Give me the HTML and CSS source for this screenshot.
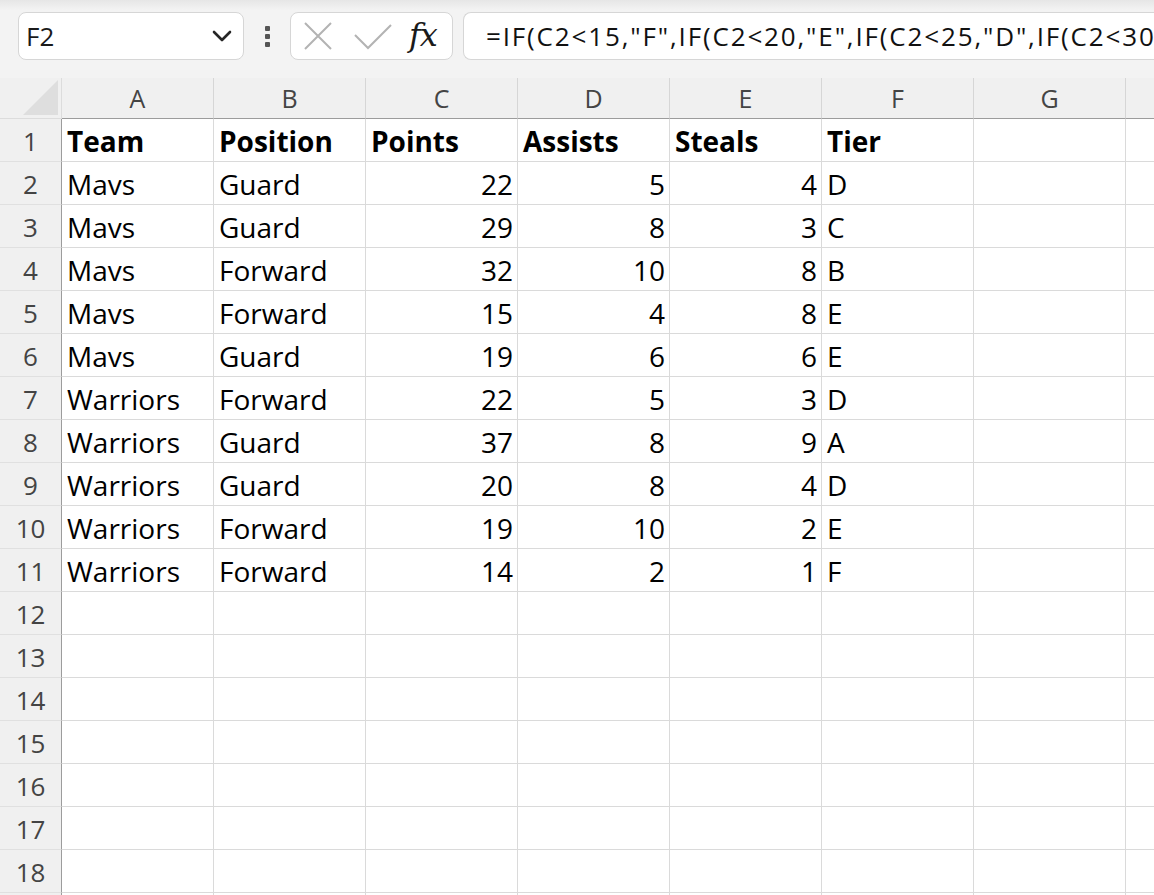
FILE: index.html
```html
<!DOCTYPE html>
<html lang="en">
<head>
<meta charset="utf-8">
<title>Book1 - Tiers</title>
<link rel="stylesheet" href="styles.css">
</head>
<body>
<div class="toolbar">
  <div class="namebox">
    <span class="namebox-ref">F2</span>
    <svg class="chevron" width="20" height="12" viewBox="0 0 20 12"><path d="M2 2 L10 10 L18 2" fill="none" stroke="#262626" stroke-width="2.6" stroke-linecap="round" stroke-linejoin="round"/></svg>
  </div>
  <div class="more">
    <span class="dot"></span><span class="dot"></span><span class="dot"></span>
  </div>
  <div class="fxbox">
    <svg class="icon-cancel" width="30" height="30" viewBox="0 0 30 30"><path d="M2 2 L28 28 M28 2 L2 28" stroke="#b3b3b3" stroke-width="2" fill="none"/></svg>
    <svg class="icon-enter" width="38" height="26" viewBox="0 0 38 26"><path d="M1 11 L14 24 L37 1" stroke="#b3b3b3" stroke-width="2" fill="none"/></svg>
    <span class="fx">fx</span>
  </div>
  <div class="formula">=IF(C2&lt;15,"F",IF(C2&lt;20,"E",IF(C2&lt;25,"D",IF(C2&lt;30,</div>
</div>

<div class="sheet">
  <div class="corner"><span class="corner-tri"></span></div>
  <div class="colhead">A</div><div class="colhead">B</div><div class="colhead">C</div><div class="colhead">D</div><div class="colhead">E</div><div class="colhead">F</div><div class="colhead">G</div><div class="colhead"></div>

  <div class="rowhead">1</div><div class="cell b">Team</div><div class="cell b">Position</div><div class="cell b">Points</div><div class="cell b">Assists</div><div class="cell b">Steals</div><div class="cell b">Tier</div><div class="cell"></div><div class="cell"></div>
  <div class="rowhead">2</div><div class="cell">Mavs</div><div class="cell">Guard</div><div class="cell n">22</div><div class="cell n">5</div><div class="cell n">4</div><div class="cell">D</div><div class="cell"></div><div class="cell"></div>
  <div class="rowhead">3</div><div class="cell">Mavs</div><div class="cell">Guard</div><div class="cell n">29</div><div class="cell n">8</div><div class="cell n">3</div><div class="cell">C</div><div class="cell"></div><div class="cell"></div>
  <div class="rowhead">4</div><div class="cell">Mavs</div><div class="cell">Forward</div><div class="cell n">32</div><div class="cell n">10</div><div class="cell n">8</div><div class="cell">B</div><div class="cell"></div><div class="cell"></div>
  <div class="rowhead">5</div><div class="cell">Mavs</div><div class="cell">Forward</div><div class="cell n">15</div><div class="cell n">4</div><div class="cell n">8</div><div class="cell">E</div><div class="cell"></div><div class="cell"></div>
  <div class="rowhead">6</div><div class="cell">Mavs</div><div class="cell">Guard</div><div class="cell n">19</div><div class="cell n">6</div><div class="cell n">6</div><div class="cell">E</div><div class="cell"></div><div class="cell"></div>
  <div class="rowhead">7</div><div class="cell">Warriors</div><div class="cell">Forward</div><div class="cell n">22</div><div class="cell n">5</div><div class="cell n">3</div><div class="cell">D</div><div class="cell"></div><div class="cell"></div>
  <div class="rowhead">8</div><div class="cell">Warriors</div><div class="cell">Guard</div><div class="cell n">37</div><div class="cell n">8</div><div class="cell n">9</div><div class="cell">A</div><div class="cell"></div><div class="cell"></div>
  <div class="rowhead">9</div><div class="cell">Warriors</div><div class="cell">Guard</div><div class="cell n">20</div><div class="cell n">8</div><div class="cell n">4</div><div class="cell">D</div><div class="cell"></div><div class="cell"></div>
  <div class="rowhead">10</div><div class="cell">Warriors</div><div class="cell">Forward</div><div class="cell n">19</div><div class="cell n">10</div><div class="cell n">2</div><div class="cell">E</div><div class="cell"></div><div class="cell"></div>
  <div class="rowhead">11</div><div class="cell">Warriors</div><div class="cell">Forward</div><div class="cell n">14</div><div class="cell n">2</div><div class="cell n">1</div><div class="cell">F</div><div class="cell"></div><div class="cell"></div>
  <div class="rowhead">12</div><div class="cell"></div><div class="cell"></div><div class="cell"></div><div class="cell"></div><div class="cell"></div><div class="cell"></div><div class="cell"></div><div class="cell"></div>
  <div class="rowhead">13</div><div class="cell"></div><div class="cell"></div><div class="cell"></div><div class="cell"></div><div class="cell"></div><div class="cell"></div><div class="cell"></div><div class="cell"></div>
  <div class="rowhead">14</div><div class="cell"></div><div class="cell"></div><div class="cell"></div><div class="cell"></div><div class="cell"></div><div class="cell"></div><div class="cell"></div><div class="cell"></div>
  <div class="rowhead">15</div><div class="cell"></div><div class="cell"></div><div class="cell"></div><div class="cell"></div><div class="cell"></div><div class="cell"></div><div class="cell"></div><div class="cell"></div>
  <div class="rowhead">16</div><div class="cell"></div><div class="cell"></div><div class="cell"></div><div class="cell"></div><div class="cell"></div><div class="cell"></div><div class="cell"></div><div class="cell"></div>
  <div class="rowhead">17</div><div class="cell"></div><div class="cell"></div><div class="cell"></div><div class="cell"></div><div class="cell"></div><div class="cell"></div><div class="cell"></div><div class="cell"></div>
  <div class="rowhead">18</div><div class="cell"></div><div class="cell"></div><div class="cell"></div><div class="cell"></div><div class="cell"></div><div class="cell"></div><div class="cell"></div><div class="cell"></div>
  <div class="rowhead"></div><div class="cell"></div><div class="cell"></div><div class="cell"></div><div class="cell"></div><div class="cell"></div><div class="cell"></div><div class="cell"></div><div class="cell"></div>
</div>
</body>
</html>
```

FILE: styles.css
```css
html, body {
  margin: 0;
  padding: 0;
}

body {
  width: 1154px;
  height: 895px;
  overflow: hidden;
  background: #f3f3f3;
  font-family: "Open Sans", "Noto Sans", sans-serif;
  color: #000;
}

/* ---------- formula bar ---------- */
.toolbar {
  display: flex;
  align-items: center;
  height: 48px;
  padding: 12px 0 18px 18px;
  background: linear-gradient(#e6e6e6 0, #f3f3f3 10px);
  white-space: nowrap;
}

.namebox {
  box-sizing: border-box;
  flex: 0 0 226px;
  height: 48px;
  display: flex;
  align-items: center;
  justify-content: space-between;
  padding: 0 11px 0 7px;
  background: #fff;
  border: 1px solid #d6d6d6;
  border-radius: 8px;
}

.namebox-ref {
  font-size: 26px;
  color: #1a1a1a;
}

.more {
  flex: 0 0 46px;
  display: flex;
  flex-direction: column;
  align-items: center;
  gap: 3px;
}

.dot {
  width: 5px;
  height: 5px;
  background: #555;
  border-radius: 1px;
}

.fxbox {
  box-sizing: border-box;
  flex: 0 0 163px;
  height: 48px;
  display: flex;
  align-items: center;
  padding: 0 10px 0 12px;
  background: #fff;
  border: 1px solid #d6d6d6;
  border-radius: 8px;
}

.icon-cancel {
  margin-right: 21px;
}

.icon-enter {
  margin-right: 17px;
  margin-top: 2px;
}

.fx {
  font-family: "DejaVu Serif", "Liberation Serif", serif;
  font-style: italic;
  font-size: 32px;
  line-height: 1;
  letter-spacing: -1px;
  color: #1a1a1a;
  margin-top: -2px;
}

/* the formula box runs on past the right edge of the window */
.formula {
  box-sizing: border-box;
  flex: 0 0 700px;
  height: 48px;
  margin-left: 10px;
  padding-left: 22px;
  line-height: 46px;
  background: #fff;
  border: 1px solid #d6d6d6;
  border-radius: 8px 0 0 8px;
  border-right: 0;
  font-size: 26px;
  letter-spacing: 1.85px;
  color: #111;
  overflow: hidden;
}

/* ---------- worksheet grid ---------- */
.sheet {
  display: grid;
  grid-template-columns: 62px repeat(8, 152px);
  grid-template-rows: 41px;
  grid-auto-rows: 43px;
  background: #fff;
}

.corner,
.colhead,
.rowhead {
  box-sizing: border-box;
  background: #f0f0f0;
  color: #444;
}

.corner {
  position: relative;
  border-right: 1px solid #dcdcdc;
  border-bottom: 1px solid #dcdcdc;
}

.corner-tri {
  position: absolute;
  right: 3px;
  bottom: 3px;
  width: 35px;
  height: 35px;
  background: #dedede;
  clip-path: polygon(100% 0, 100% 100%, 0 100%);
}

.colhead {
  font-size: 25px;
  line-height: 40px;
  text-align: center;
  border-right: 1px solid #d6d6d6;
  border-bottom: 1px solid #9c9c9c;
}

.rowhead {
  font-size: 26px;
  line-height: 42px;
  padding-top: 1px;
  text-align: center;
  border-right: 1px solid #9c9c9c;
  border-bottom: 1px solid #e0e0e0;
}

.cell {
  box-sizing: border-box;
  font-size: 28px;
  line-height: 41px;
  padding: 2px 4px 0 5px;
  border-right: 1px solid #dadada;
  border-bottom: 1px solid #dadada;
  white-space: nowrap;
  overflow: hidden;
}

.cell.b {
  font-weight: 700;
}

.cell.n {
  text-align: right;
}
```
